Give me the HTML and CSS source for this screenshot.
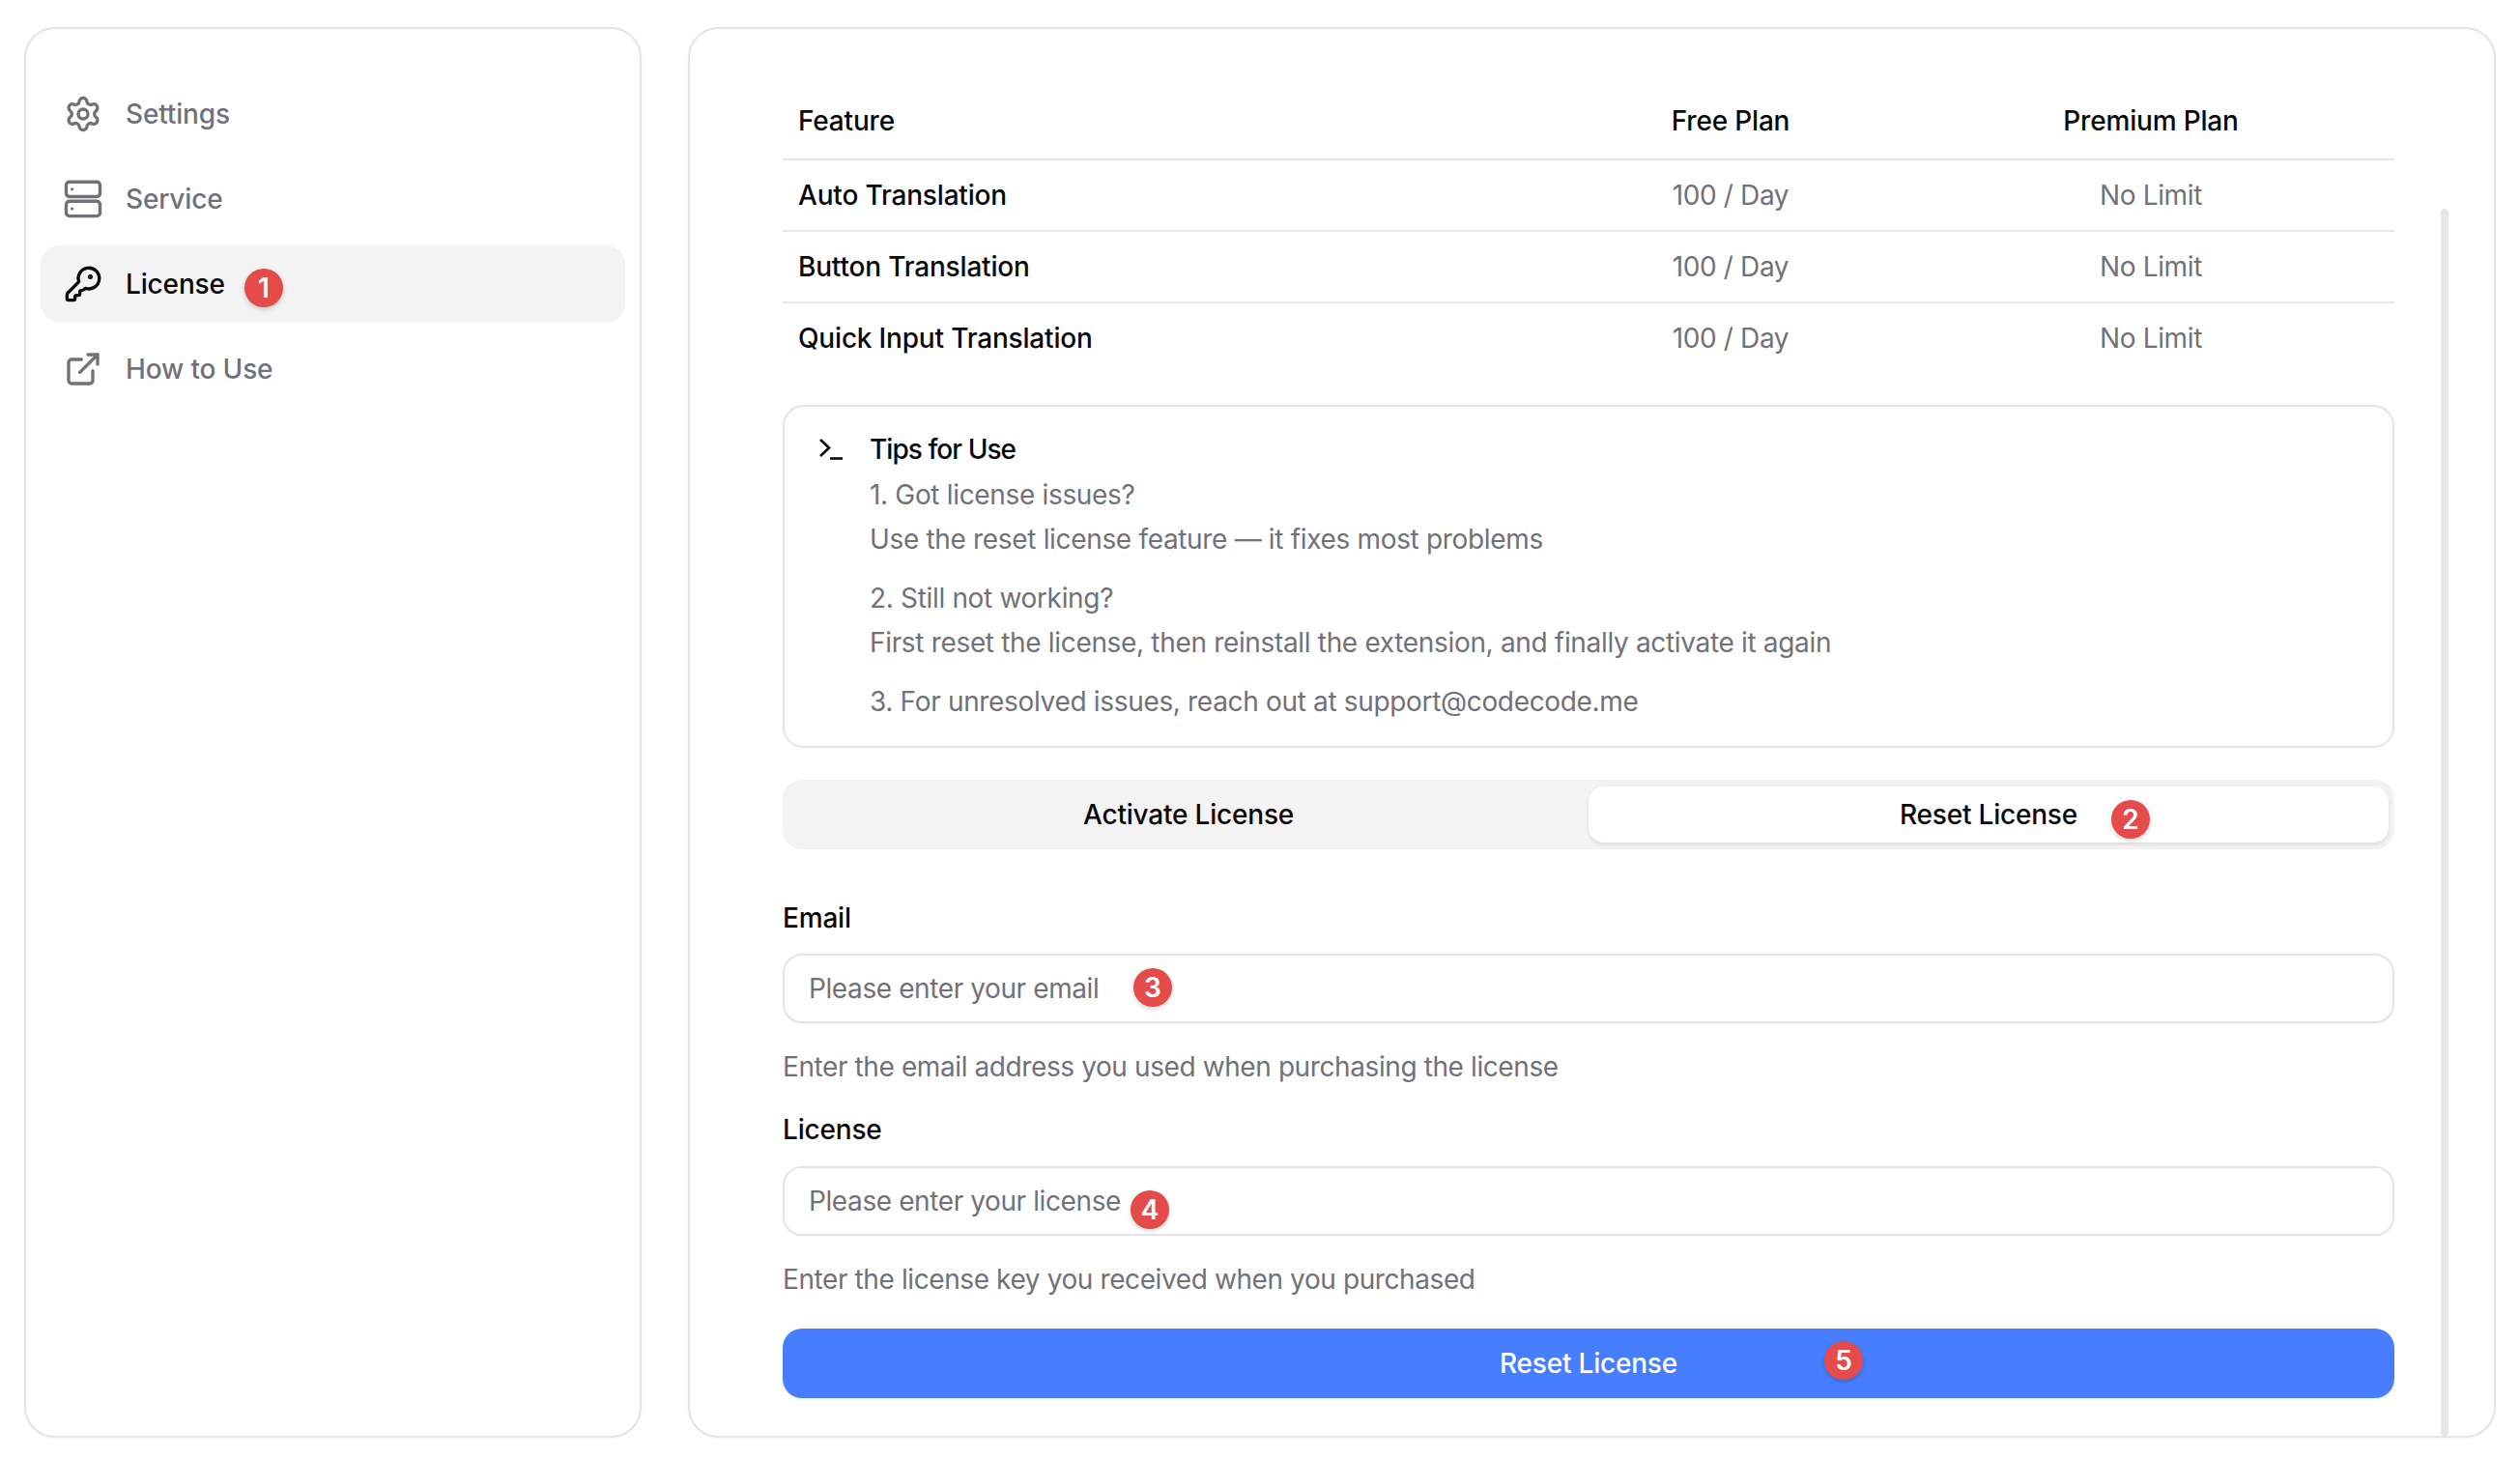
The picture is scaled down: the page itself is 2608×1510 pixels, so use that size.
FILE: index.html
```html
<!DOCTYPE html>
<html lang="en">
<head>
<meta charset="utf-8">
<title>License</title>
<link rel="stylesheet" href="styles.css">
</head>
<body>
<div class="page">
  <aside class="panel sidebar">
    <nav class="nav">
      <a class="nav-item">
        <svg class="icon" viewBox="0 0 24 24"><path d="M9.671 4.136a2.34 2.34 0 0 1 4.659 0 2.34 2.34 0 0 0 3.319 1.915 2.34 2.34 0 0 1 2.33 4.033 2.34 2.34 0 0 0 0 3.831 2.34 2.34 0 0 1-2.33 4.033 2.34 2.34 0 0 0-3.319 1.915 2.34 2.34 0 0 1-4.659 0 2.34 2.34 0 0 0-3.32-1.915 2.34 2.34 0 0 1-2.33-4.033 2.34 2.34 0 0 0 0-3.831A2.34 2.34 0 0 1 6.35 6.051a2.34 2.34 0 0 0 3.319-1.915"/><circle cx="12" cy="12" r="3"/></svg>
        <span>Settings</span>
      </a>
      <a class="nav-item">
        <svg class="icon icon-server" viewBox="0 0 40 40"><rect x="2.5" y="2.2" width="35" height="15.3" rx="3.4"/><rect x="2.5" y="22.3" width="35" height="15.3" rx="3.4"/><path class="dot" d="M8.6 9.8h.1M8.6 29.9h.1"/></svg>
        <span>Service</span>
      </a>
      <a class="nav-item is-active">
        <svg class="icon" viewBox="0 0 24 24"><path d="M2.586 17.414A2 2 0 0 0 2 18.828V21a1 1 0 0 0 1 1h3a1 1 0 0 0 1-1v-1a1 1 0 0 1 1-1h1a1 1 0 0 0 1-1v-1a1 1 0 0 1 1-1h.172a2 2 0 0 0 1.414-.586l.814-.814a6.5 6.5 0 1 0-4-4z"/><circle class="fill" cx="16.5" cy="7.5" r=".5"/></svg>
        <span>License</span>
        <b class="badge badge-1">1</b>
      </a>
      <a class="nav-item">
        <svg class="icon" viewBox="0 0 24 24"><path d="M15 3h6v6"/><path d="M10 14 21 3"/><path d="M18 13v6a2 2 0 0 1-2 2H5a2 2 0 0 1-2-2V8a2 2 0 0 1 2-2h6"/></svg>
        <span>How to Use</span>
      </a>
    </nav>
  </aside>

  <main class="panel content">
    <div class="scrollbar"></div>
    <table class="plans">
      <thead>
        <tr><th class="col-feature">Feature</th><th class="col-free">Free Plan</th><th class="col-premium">Premium Plan</th></tr>
      </thead>
      <tbody>
        <tr><td>Auto Translation</td><td>100 / Day</td><td>No Limit</td></tr>
        <tr><td>Button Translation</td><td>100 / Day</td><td>No Limit</td></tr>
        <tr><td>Quick Input Translation</td><td>100 / Day</td><td>No Limit</td></tr>
      </tbody>
    </table>

    <section class="tips">
      <svg class="tips-icon" viewBox="0 0 26 24"><path d="M2 2l9 8.5-9 8.5"/><path d="M12 21.5h13"/></svg>
      <div class="tips-body">
        <h2 class="tips-title">Tips for Use</h2>
        <p>1. Got license issues?<br>Use the reset license feature — it fixes most problems</p>
        <p>2. Still not working?<br>First reset the license, then reinstall the extension, and finally activate it again</p>
        <p>3. For unresolved issues, reach out at support@codecode.me</p>
      </div>
    </section>

    <div class="tabs">
      <button class="tab">Activate License</button>
      <button class="tab is-active">Reset License<b class="badge badge-2">2</b></button>
    </div>

    <form class="form">
      <label class="label">Email</label>
      <div class="field">
        <input class="input" type="text" placeholder="Please enter your email">
        <b class="badge badge-3">3</b>
      </div>
      <p class="help">Enter the email address you used when purchasing the license</p>
      <label class="label label-second">License</label>
      <div class="field">
        <input class="input" type="text" placeholder="Please enter your license">
        <b class="badge badge-4">4</b>
      </div>
      <p class="help">Enter the license key you received when you purchased</p>
      <button class="submit" type="button">Reset License<b class="badge badge-5">5</b></button>
    </form>
  </main>
</div>
</body>
</html>
```

FILE: styles.css
```css
* { box-sizing: border-box; }
html, body { margin: 0; height: 100%; background: #fff; }
body {
  font-family: Inter, "Liberation Sans", sans-serif;
  font-size: 28px;
  line-height: 40px;
  color: #09090b;
}
.page {
  display: flex;
  gap: 48px;
  height: 1510px;
  padding: 28px 25px 22px;
  overflow: hidden;
}
.panel {
  background: #fff;
  border: 2px solid #e5e5e5;
  border-radius: 32px;
  box-shadow: 0 1px 3px rgba(0, 0, 0, .05);
}
.sidebar { width: 639px; flex: none; padding: 48px 15px; }
.nav { display: flex; flex-direction: column; gap: 8px; }
.nav-item {
  position: relative;
  display: flex;
  align-items: center;
  gap: 24px;
  height: 80px;
  padding: 0 24px;
  border-radius: 20px;
  font-weight: 500;
  letter-spacing: -.15px;
  color: #71717a;
}
.nav-item.is-active { background: #f3f3f3; color: #09090b; }
.icon {
  width: 40px;
  height: 40px;
  flex: none;
  fill: none;
  stroke: currentColor;
  stroke-width: 2;
  stroke-linecap: round;
  stroke-linejoin: round;
}
.icon-server { stroke-width: 3.4; }
.icon .dot { stroke-width: 3; }
.icon .fill { fill: currentColor; }

.badge {
  position: absolute;
  z-index: 2;
  width: 40px;
  height: 40px;
  display: flex;
  align-items: center;
  justify-content: center;
  border-radius: 50%;
  background: #e54b4b;
  color: #fff;
  font-size: 28px;
  font-weight: 600;
  letter-spacing: 0;
  line-height: 40px;
  box-shadow: 0 2px 5px rgba(0, 0, 0, .18);
}
.badge-1 { left: 211px; top: 24px; }
.badge-2 { left: 541px; top: 14px; }
.badge-3 { left: 363px; top: 15px; }
.badge-4 { left: 360px; top: 25px; }
.badge-5 { left: 1078px; top: 13px; }

.content {
  position: relative;
  flex: 1;
  min-width: 0;
  padding: 55px 103px 0 96px;
  overflow: hidden;
}
.scrollbar {
  position: absolute;
  top: 186px;
  bottom: 0;
  right: 47px;
  width: 8px;
  border-radius: 4px;
  background: #e5e7eb;
}
.plans {
  width: 100%;
  table-layout: fixed;
  border-collapse: collapse;
  border-spacing: 0;
}
.plans th, .plans td {
  padding: 0 16px;
  font-weight: 500;
  letter-spacing: -.18px;
  text-align: left;
}
.plans th { height: 80px; color: #09090b; }
.plans td { height: 74px; }
.plans tr { border-bottom: 2px solid #e5e5e5; }
.plans tbody tr:last-child { border-bottom: 0; }
.plans tbody tr:last-child td { height: 72px; }
.plans td:nth-child(n+2) {
  text-align: center;
  color: #71717a;
  font-weight: 400;
  letter-spacing: -.37px;
}
.plans th:nth-child(n+2) { text-align: center; }
.col-feature { width: 798px; }
.col-free { width: 366px; }
.col-premium { width: 504px; }

.tips {
  display: flex;
  margin-top: 34px;
  height: 355px;
  padding: 21px 32px 0 35px;
  border: 2px solid #e5e5e5;
  border-radius: 22px;
  box-shadow: 0 1px 2px rgba(0, 0, 0, .03);
}
.tips-icon {
  flex: none;
  width: 26px;
  height: 24px;
  margin: 11px 27px 0 0;
  fill: none;
  stroke: #09090b;
  stroke-width: 2.6;
}
.tips-body { line-height: 46.5px; letter-spacing: -.33px; color: #71717a; }
.tips-title {
  margin: 0;
  font-size: 28px;
  font-weight: 500;
  letter-spacing: -.95px;
  line-height: 46.5px;
  color: #09090b;
}
.tips-body p { margin: 0 0 14px; }

.tabs {
  display: grid;
  grid-template-columns: 1fr 1fr;
  margin-top: 33px;
  height: 72px;
  padding: 7px 6px;
  border-radius: 20px;
  background: #f3f3f3;
}
.tab {
  position: relative;
  border: 0;
  border-radius: 16px;
  background: transparent;
  font: inherit;
  font-weight: 500;
  letter-spacing: -.2px;
  color: #09090b;
}
.tab.is-active {
  background: #fff;
  box-shadow: 0 2px 4px rgba(0, 0, 0, .1);
}

.form { display: flex; flex-direction: column; margin-top: 51px; }
.label { font-weight: 500; letter-spacing: -.18px; height: 40px; margin-bottom: 17px; }
.label-second { margin-top: 25px; margin-bottom: 18px; }
.field { position: relative; }
.input {
  display: block;
  width: 100%;
  height: 72px;
  padding: 0 25px;
  border: 2px solid #e5e5e5;
  border-radius: 20px;
  background: #fff;
  font: inherit;
  letter-spacing: -.4px;
  color: #09090b;
  outline: 0;
  box-shadow: 0 1px 2px rgba(0, 0, 0, .04);
}
.input::placeholder { color: #71717a; opacity: 1; }
.help { margin: 25px 0 0; color: #71717a; letter-spacing: -.4px; }
.submit {
  position: relative;
  height: 72px;
  margin-top: 31px;
  border: 0;
  border-radius: 20px;
  background: #477eff;
  font: inherit;
  font-weight: 500;
  letter-spacing: -.2px;
  color: #fff;
  box-shadow: 0 1px 2px rgba(0, 0, 0, .05);
}
```
